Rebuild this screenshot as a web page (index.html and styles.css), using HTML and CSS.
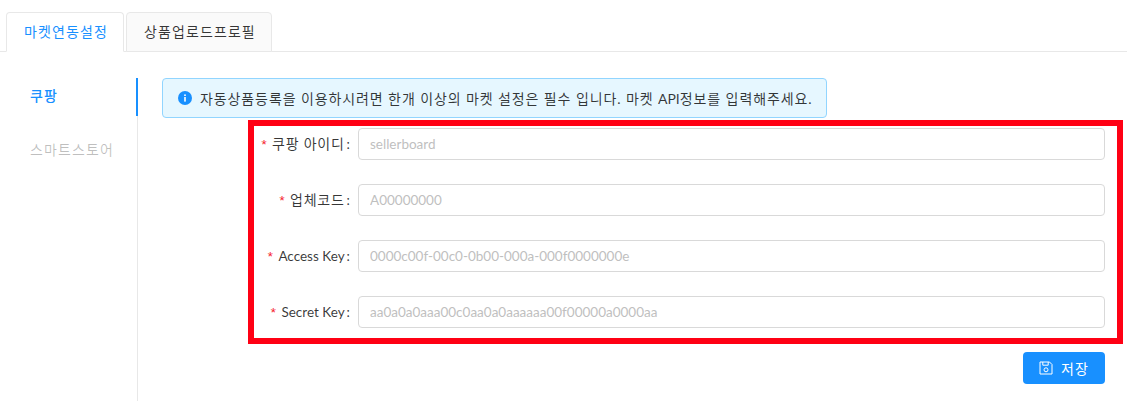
FILE: index.html
```html
<!DOCTYPE html>
<html lang="ko">
<head>
<meta charset="utf-8">
<title>마켓연동설정</title>
<link rel="stylesheet" href="styles.css">
</head>
<body>
<div class="tabs">
  <div class="tab tab-active ko-wide">마켓연동설정</div>
  <div class="tab tab-second ko-wide">상품업로드프로필</div>
</div>
<div class="main">
  <nav class="side">
    <div class="side-item side-active ko-wide">쿠팡</div>
    <div class="side-item side-muted ko-wide">스마트스토어</div>
  </nav>
  <div class="content">
    <div class="alert">
      <svg class="alert-icon" viewBox="0 0 14 14" aria-hidden="true"><circle cx="7" cy="7" r="7" fill="#1890ff"/><rect x="6.2" y="6" width="1.6" height="4.6" fill="#fff"/><rect x="6.2" y="3.4" width="1.6" height="1.6" fill="#fff"/></svg>
      <span class="ko alert-text">자동상품등록을 이용하시려면 한개 이상의 마켓 설정은 필수 입니다. 마켓 <span class="latin">API</span>정보를 입력해주세요.</span>
    </div>
    <form class="form">
      <div class="row">
        <label class="label label-ko"><span class="req">*</span><span class="ko">쿠팡 아이디</span><span class="colon">:</span></label>
        <input class="input" placeholder="sellerboard">
      </div>
      <div class="row">
        <label class="label label-ko"><span class="req">*</span><span class="ko">업체코드</span><span class="colon">:</span></label>
        <input class="input" placeholder="A00000000">
      </div>
      <div class="row">
        <label class="label"><span class="req">*</span>Access Key<span class="colon">:</span></label>
        <input class="input" placeholder="0000c00f-00c0-0b00-000a-000f0000000e">
      </div>
      <div class="row">
        <label class="label"><span class="req">*</span>Secret Key<span class="colon">:</span></label>
        <input class="input" placeholder="aa0a0a0aaa00c0aa0a0aaaaaa00f00000a0000aa">
      </div>
    </form>
    <div class="actions">
      <button class="btn" type="button">
        <svg class="btn-icon" viewBox="0 0 14 14" fill="none" stroke="#fff" stroke-width="1" aria-hidden="true"><path d="M1 1h9.5l2.5 2.5V13H1z"/><path d="M3.8 1v3.2h5.4V1"/><circle cx="7" cy="8.8" r="2"/></svg>
        <span class="ko-wide">저장</span>
      </button>
    </div>
  </div>
</div>
</body>
</html>
```
FILE: styles.css
```css
* { box-sizing: border-box; }
html, body { margin: 0; padding: 0; height: 401px; overflow: hidden; background: #fff; }
body {
  font-family: Lato, "Noto Sans CJK KR", sans-serif;
  font-size: 13.5px;
  color: rgba(0,0,0,.78);
}
.ko { font-size: 14px; letter-spacing: .77px; }
.ko-wide { font-size: 14px; letter-spacing: 1.1px; }
.alert-text { letter-spacing: .9px; }
.latin { letter-spacing: 0; }
.tabs {
  display: flex;
  gap: 2px;
  height: 52px;
  padding: 12px 0 0 6px;
  border-bottom: 1px solid #e8e8e8;
}
.tab {
  height: 40px;
  padding: 0 17px;
  line-height: 38px;
  border: 1px solid #e8e8e8;
  border-radius: 4px 4px 0 0;
  background: #fafafa;
  white-space: nowrap;
}
.tab-active {
  width: 118px;
  color: #1890ff;
  background: #fff;
  border-bottom-color: #fff;
}
.tab-second { width: 146px; }
.main { display: flex; height: 349px; padding-top: 26px; }
.side { width: 138px; border-right: 1px solid #e8e8e8; flex: none; }
.side-item { height: 38px; line-height: 36px; padding-left: 30px; margin-bottom: 16px; }
.side-active { color: #1890ff; border-right: 2px solid #1890ff; margin-right: -1px; font-weight: 500; }
.side-muted { color: rgba(0,0,0,.25); }
.content { flex: 1; padding-left: 24px; min-width: 0; }
.alert {
  display: flex;
  align-items: center;
  gap: 8px;
  width: 665px;
  height: 40px;
  padding-left: 15px;
  background: #e6f7ff;
  border: 1px solid #91d5ff;
  border-radius: 4px;
  white-space: nowrap;
}
.alert-icon { width: 14px; height: 14px; flex: none; }
.form {
  width: 875px;
  height: 224px;
  margin: 2px 0 0 86px;
  padding: 2px 12px 0 0;
  border: 6px solid #ff0014;
  display: flex;
  flex-direction: column;
  gap: 24px;
}
.row { display: flex; align-items: center; height: 32px; }
.label { width: 104px; flex: none; text-align: right; white-space: nowrap; }
.label-ko { padding-bottom: 2px; }
.req { color: #f5222d; margin-right: 4px; font-family: "Liberation Mono", monospace; }
.colon { margin: 0 8px 0 2px; }
.input {
  flex: 1;
  height: 32px;
  min-width: 0;
  padding: 0 11px;
  border: 1px solid #d9d9d9;
  border-radius: 4px;
  font: inherit;
  color: inherit;
  outline: none;
}
.input::placeholder { color: #bfbfbf; opacity: 1; }
.actions { display: flex; justify-content: flex-end; width: 943px; margin-top: 8px; }
.btn {
  display: flex;
  align-items: center;
  justify-content: center;
  gap: 8px;
  width: 82px;
  height: 32px;
  padding: 0;
  border: 0;
  border-radius: 4px;
  background: #1890ff;
  color: #fff;
  font: inherit;
}
.btn-icon { width: 14px; height: 14px; flex: none; }
```
